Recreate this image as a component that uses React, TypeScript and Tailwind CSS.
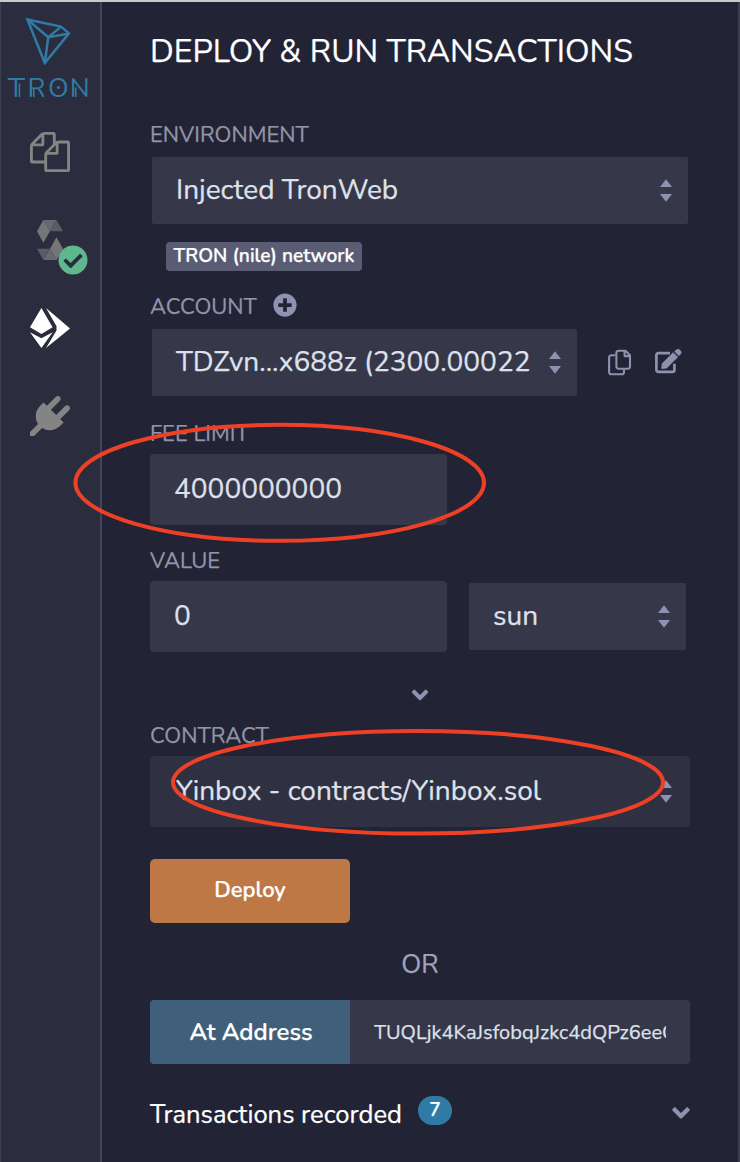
import React from "react";
import { FaAngleDown, FaCheckCircle, FaPlusCircle } from "react-icons/fa";

function Carets() {
  return (
    <svg width="12" height="23" viewBox="0 0 12 23" className="shrink-0 fill-[#8c92b0]">
      <path d="M6 0.3 12 7.9H0Z" />
      <path d="M0 15H12L6 22.8Z" />
    </svg>
  );
}

function CopyIcon() {
  return (
    <svg width="24" height="27" viewBox="0 0 24 27" fill="none" stroke="#8c92b0" strokeWidth="2.1" strokeLinejoin="round" className="-mt-px ml-[31px]">
      <path d="M17.500 1.700H10.500A2.100 2.100 0 0 0 8.400 3.800V17.600A2.100 2.100 0 0 0 10.500 19.700H19.900A2.100 2.100 0 0 0 22 17.600V6.200Z" />
      <path d="M16.600 1.700V7.100H22" />
      <path d="M7.400 6.300H3.200A2.100 2.100 0 0 0 1.100 8.400V23.200A2.100 2.100 0 0 0 3.200 25.300H13.900A2.100 2.100 0 0 0 16 23.200V20.500" />
    </svg>
  );
}

function EditIcon() {
  return (
    <svg width="28" height="26" viewBox="0 0 28 26" className="-mt-[3px] ml-[23px]">
      <path d="M15 5.100H3.300A1.900 1.900 0 0 0 1.400 7V21.900A1.900 1.900 0 0 0 3.300 23.800H17.500A1.900 1.900 0 0 0 19.400 21.900V15.800" fill="none" stroke="#8c92b0" strokeWidth="2.7" />
      <path d="M7.200 15.600 18.200 4.600 22.700 9.100 11.700 20.100 7.400 20.700Q6.600 20.700 6.600 19.900Z" fill="#8c92b0" stroke="#8c92b0" strokeWidth="0.6" />
      <path d="M19.400 3.400 21.300 1.500Q23 0.300 24.600 1.500L26 2.900Q27.200 4.400 26 6L23.900 8Z" fill="#8c92b0" />
    </svg>
  );
}

function Label({ children }: { children: React.ReactNode }) {
  return <div className="text-[22px] leading-[30px] text-[#9295a8]">{children}</div>;
}

function TronLogo() {
  return (
    <svg width="84" height="84" viewBox="6 16 84 84" className="ml-[6px] mt-4 text-[#2f7ba5]">
      <g fill="none" stroke="currentColor" strokeWidth="2.5" strokeLinejoin="miter">
        <path d="M27.4 19.5 61 26.6 69 33.4 44.8 63Z" />
        <path d="M27.4 19.5 48.3 37.2 44.8 63M48.3 37.2 61 26.6M48.3 37.2 69 33.4" />
      </g>
      <text x="7.8 27.6 47.9 69.8" y="97" fontSize="27" fill="currentColor" className="font-[Nunito,Lato,sans-serif]">
        TRON
      </text>
      <g fill="none" stroke="currentColor" strokeWidth="1.6">
        <path d="M8 79.100H25M19.400 83.500V97M33.800 88V97M75.800 87.500V97" />
      </g>
      <circle cx="58.4" cy="87.5" r="1.5" fill="currentColor" />
    </svg>
  );
}

function FilesIcon() {
  return (
    <svg width="40" height="40" viewBox="0 0 1792 1792" className="ml-[30px] mt-8 fill-[#848484]">
      <path d="M1696 384q40 0 68 28t28 68v1216q0 40-28 68t-68 28h-960q-40 0-68-28t-28-68v-288h-544q-40 0-68-28t-28-68v-672q0-40 20-88t48-76l408-408q28-28 76-48t88-20h416q40 0 68 28t28 68v328q68-40 128-40h416zm-544 213l-299 299h299v-299zm-640-384l-299 299h299v-299zm196 647l316-316v-416h-384v416q0 40-28 68t-68 28h-416v640h512v-256q0-40 20-88t48-76zm956 804v-1152h-384v416q0 40-28 68t-68 28h-416v640h896z" />
    </svg>
  );
}

function SolidityIcon() {
  return (
    <div className="relative ml-[37px] mt-12 h-10 w-[52px]">
      <svg width="26" height="40" viewBox="0 0 26 40">
        <path fill="#686870" d="M6.3 0H19.5L13 11.3Z" />
        <path fill="#5a5b65" d="M19.5 0 26 11.3H13Z" />
        <path fill="#757578" d="M6.3 0 13 11.3 6.3 22.7 0 11.3Z" />
        <path fill="#757578" d="M19.5 17.3 26 28.7 19.5 40 13 28.7Z" />
        <path fill="#686870" d="M13 28.7 19.5 40H6.3Z" />
        <path fill="#5a5b65" d="M0 28.7H13L6.3 40Z" />
      </svg>
      <FaCheckCircle className="absolute left-[21px] top-[25px] size-[30px] text-[#5fb88c]" />
    </div>
  );
}

function DeployIcon() {
  return (
    <svg width="40" height="40" viewBox="0 0 40 40" className="ml-[30px] mt-12 fill-white">
      <path d="M11.4 0 22.6 19.2 11.4 26 0 19.2Z" />
      <path d="M0 24.3 11.4 30.3 22.7 24.3 11.4 40Z" />
      <path d="M16 0 40 20.4 16 40 26.5 22.5V18.2Z" />
    </svg>
  );
}

function PlugIcon() {
  return (
    <svg width="40" height="40" viewBox="0 0 1792 1792" className="ml-[30px] mt-12 fill-[#848484]">
      <path d="M1755 453q37 38 37 90.5t-37 90.5l-401 400 150 150-160 160q-163 163-389.5 186.500t-411.500-100.500l-362 362h-181v-181l362-362q-124-185-100.500-411.500t186.500-389.500l160-160 150 150 400-401q38-37 91-37t90 37 37 90.500-37 90.500l-400 401 234 234 401-400q38-37 91-37t90 37z" />
    </svg>
  );
}

export default function App() {
  return (
    <div className="relative flex h-[1162px] w-[740px] overflow-hidden border-t-2 border-[#c8cacb] bg-[#222334] font-[Nunito,Lato,sans-serif] text-[#dfe1ea] [-webkit-text-stroke:0.25px]">
      <aside className="-mt-[2px] flex w-[102px] shrink-0 flex-col border-l border-r-2 border-l-[#3d3e51] border-r-[#434455] bg-[#2b2c3d] pt-[2px]">
        <div className="-ml-px -mt-[2px] flex flex-col">
          <TronLogo />
          <FilesIcon />
          <SolidityIcon />
          <DeployIcon />
          <PlugIcon />
        </div>
      </aside>

      <main className="flex min-w-0 flex-1 flex-col border-r-2 border-[#3c3d4e] pl-12 pr-12">
        <h1 className="mt-[30px] whitespace-nowrap text-[32px] leading-10 text-white">DEPLOY &amp; RUN TRANSACTIONS</h1>

        <div className="mt-[48px]">
          <Label>ENVIRONMENT</Label>
        </div>
        <div className="ml-[2px] mt-[7px] flex h-[67px] w-[536px] items-center justify-between rounded-[2px] bg-[#36384a] pl-6 pr-4 text-[28px]">
          <span className="pb-px">Injected TronWeb</span>
          <Carets />
        </div>
        <div className="ml-4 mt-[18px] flex h-[29px] w-[196px] items-center justify-center whitespace-nowrap rounded bg-[#5a5c74] pb-px text-[19.200px] font-semibold text-white">
          TRON (nile) network
        </div>

        <div className="mt-[21px] flex h-[30px] items-center">
          <Label>ACCOUNT</Label>
          <FaPlusCircle className="-mt-[4px] ml-4 size-6 text-[#8c92b0]" />
        </div>
        <div className="ml-[2px] mt-[7px] flex items-center">
          <div className="flex h-[67px] w-[425px] items-center justify-between rounded-[2px] bg-[#36384a] pl-6 pr-4 text-[28px]">
            <span className="whitespace-nowrap pb-px">TDZvn...x688z (2300.00022</span>
            <Carets />
          </div>
          <CopyIcon />
          <EditIcon />
        </div>

        <div className="mt-[23px]">
          <Label>FEE LIMIT</Label>
        </div>
        <div className="mt-[5px] flex h-[71px] w-[297px] items-center rounded bg-[#36384a] pb-[2px] pl-6 text-[28px]">4000000000</div>

        <div className="mt-[21px]">
          <Label>VALUE</Label>
        </div>
        <div className="mt-[5px] flex items-center gap-[22px]">
          <div className="flex h-[71px] w-[297px] items-center rounded bg-[#36384a] pb-[2px] pl-6 text-[28px]">0</div>
          <div className="flex h-[67px] w-[217px] items-center justify-between rounded-[2px] bg-[#36384a] pl-6 pr-4 text-[28px]">
            <span className="pb-[2px]">sun</span>
            <Carets />
          </div>
        </div>

        <div className="mt-[30px] flex h-[26px] w-[540px] justify-center">
          <FaAngleDown className="size-[26px] text-[#8c92b0]" />
        </div>

        <div className="mt-[13px]">
          <Label>CONTRACT</Label>
        </div>
        <div className="mt-[5px] flex h-[71px] w-[540px] items-center justify-between rounded bg-[#2f3041] pl-[26px] pr-[18px] text-[28px]">
          <span className="pb-[2px]">Yinbox - contracts/Yinbox.sol</span>
          <Carets />
        </div>

        <button className="mt-8 h-16 w-[200px] rounded-[5px] bg-[#bd7846] pb-px text-[22px] font-semibold text-white">Deploy</button>

        <div className="mt-[24px] w-[540px] text-center text-[26px] leading-9 text-[#a2a3bd]">OR</div>

        <div className="mt-[17px] flex h-16 w-[540px] overflow-hidden rounded">
          <button className="w-[200px] shrink-0 bg-[#405f7a] pl-[2px] text-[24px] font-semibold text-white">At Address</button>
          <div className="flex flex-1 items-center bg-[#36384a] px-6 pt-px text-[20px]">
            <span className="w-[292px] overflow-hidden whitespace-nowrap">TUQLjk4KaJsfobqJzkc4dQPz6eeC</span>
          </div>
        </div>

        <div className="mt-8 flex h-9 w-[540px] items-center">
          <span className="mt-[2px] text-[25.600px] leading-9 text-white">Transactions recorded</span>
          <span className="-mt-[7px] ml-4 flex h-[29px] w-[34px] items-center justify-center rounded-full bg-[#2f7ba5] text-[19.200px] font-semibold text-white">7</span>
          <FaAngleDown className="-mr-[5px] -mt-[2px] ml-auto size-[28px] text-[#8c92b0]" />
        </div>
      </main>

      <svg width="740" height="1162" className="pointer-events-none absolute -top-[2px] left-0" fill="none" stroke="#ee4025" strokeWidth="4">
        <ellipse cx="279.700" cy="482.800" rx="204.300" ry="58" />
        <ellipse cx="418" cy="782.300" rx="245" ry="51.300" />
      </svg>
    </div>
  );
}
